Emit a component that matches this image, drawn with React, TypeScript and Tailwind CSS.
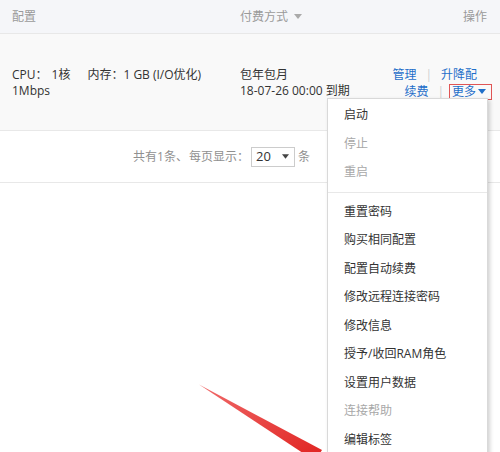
const menuTop = [
  { label: "启动", disabled: false },
  { label: "停止", disabled: true },
  { label: "重启", disabled: true },
];

const menuRest = [
  { label: "重置密码", disabled: false },
  { label: "购买相同配置", disabled: false },
  { label: "配置自动续费", disabled: false },
  { label: "修改远程连接密码", disabled: false },
  { label: "修改信息", disabled: false },
  { label: "授予/收回RAM角色", disabled: false },
  { label: "设置用户数据", disabled: false },
  { label: "连接帮助", disabled: true },
  { label: "编辑标签", disabled: false },
];

function Caret({ className = "" }: { className?: string }) {
  return (
    <svg width="8" height="5" viewBox="0 0 8 5" className={className}>
      <path d="M0 0h8L4 5z" fill="currentColor" />
    </svg>
  );
}

function MenuItem({ label, disabled }: { label: string; disabled: boolean }) {
  return (
    <div
      className={
        "h-[28.5px] flex items-center pl-[16px] " +
        (disabled ? "text-[#a8a8a8]" : "text-[#333]")
      }
    >
      {label}
    </div>
  );
}

export default function App() {
  return (
    <div
      className="relative w-[500px] h-[452px] overflow-hidden bg-white text-[12px] text-[#333]"
      style={{ fontFamily: "'Open Sans','Noto Sans CJK SC',sans-serif" }}
    >
      {/* header */}
      <div className="h-[34px] flex items-center bg-[#f5f6f9] border-b border-[#e8e8e8] text-[#9a9a9a]">
        <div className="w-[240px] pl-[12px]">配置</div>
        <div className="flex-1 flex items-center gap-[6px]">
          付费方式
          <Caret className="text-[#aaa]" />
        </div>
        <div className="pr-[13px]">操作</div>
      </div>

      {/* instance row */}
      <div className="h-[97px] flex items-center bg-[#f9f9f9] border-b border-[#e8e8e8] leading-[16px] pt-[2px]">
        <div className="w-[240px] pl-[12px]">
          <div className="flex">
            <span>CPU：</span>
            <span className="ml-[4px]">1核</span>
            <span className="ml-[17px]">内存：1 GB (I/O优化)</span>
          </div>
          <div>1Mbps</div>
        </div>
        <div className="flex-1">
          <div>包年包月</div>
          <div>18-07-26 00:00 到期</div>
        </div>
        <div className="flex flex-col items-end text-[#1f6fc9]">
          <div className="flex items-center pr-[23px]">
            <span>管理</span>
            <span className="mx-[9px] text-[#d0d0d0]">|</span>
            <span>升降配</span>
          </div>
          <div className="flex items-center pr-[8px] mt-[1px]">
            <span>续费</span>
            <span className="ml-[9px] mr-[5px] text-[#d0d0d0]">|</span>
            <span className="flex items-center gap-[2px] border border-[#e05555] pl-[2px] pr-[5px] h-[16px]">
              <span className="underline underline-offset-2">更多</span>
              <Caret />
            </span>
          </div>
        </div>
      </div>

      {/* pagination */}
      <div className="h-[52px] flex items-center justify-end pr-[190px] border-b border-[#e8e8e8] text-[#909090]">
        <span>共有1条、</span>
        <span className="ml-[1px]">每页显示：</span>
        <div className="ml-[2px] w-[44px] h-[20px] border border-[#ccc] flex items-center justify-between pl-[4px] pr-[5px] text-[#333] text-[13px]">
          <span>20</span>
          <Caret className="text-[#444] w-[7px]" />
        </div>
        <span className="ml-[3px]">条</span>
      </div>

      {/* more menu */}
      <div className="absolute left-[327px] top-[98px] w-[161px] h-[380px] bg-white border border-[#d9d9d9] shadow-[2px_2px_4px_rgba(0,0,0,0.18)] pt-[2px]">
        {menuTop.map((m) => (
          <MenuItem key={m.label} {...m} />
        ))}
        <div className="my-[5px] border-t border-[#e8e8e8]" />
        {menuRest.map((m) => (
          <MenuItem key={m.label} {...m} />
        ))}
      </div>

      {/* annotation arrow */}
      <svg className="absolute left-0 top-0 pointer-events-none" width="500" height="452">
        <defs>
          <linearGradient id="ar" x1="0" y1="0" x2="1" y2="1">
            <stop offset="0" stopColor="#f06a6a" />
            <stop offset="1" stopColor="#e0221f" />
          </linearGradient>
        </defs>
        <polygon points="199,384.5 322,450 315,461" fill="url(#ar)" />
      </svg>
    </div>
  );
}
